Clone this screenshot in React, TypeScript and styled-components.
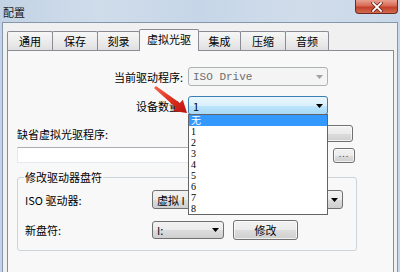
import React from "react";
import styled, { createGlobalStyle, css } from "styled-components";

const Global = createGlobalStyle`
  html, body {
    margin: 0;
    padding: 0;
    width: 400px;
    height: 272px;
    overflow: hidden;
    font-family: "Noto Sans CJK SC", "Noto Sans", sans-serif;
    font-size: 11px;
    color: #000;
  }
  #root { height: 100%; }
  * { box-sizing: border-box; }
`;

const Window = styled.div`
  width: 400px;
  height: 272px;
  display: flex;
  flex-direction: column;
  background: linear-gradient(90deg, #c3d3e5 0%, #cfdcea 25%, #c6d6e8 50%, #d0dcea 75%, #c9d8e8 100%);
`;

const TitleBar = styled.div`
  height: 22px;
  flex: none;
  display: flex;
  justify-content: space-between;
  align-items: flex-start;
  padding-left: 3px;
`;

const Title = styled.div`
  line-height: 22px;
  padding-top: 1px;
  font-size: 11px;
  color: #1a1a1a;
`;

const CloseButton = styled.div`
  width: 43px;
  height: 14px;
  margin-right: 2px;
  border: 1px solid #6e2a20;
  border-top: none;
  border-radius: 0 0 4px 4px;
  background: linear-gradient(#e8a090 0%, #d86a55 45%, #c3402a 55%, #d06a50 100%);
  display: flex;
  align-items: center;
  justify-content: center;
`;

const Client = styled.div`
  flex: 1;
  margin: 0 2px;
  border: 1px solid #8597ad;
  border-bottom: none;
  background: #f0f0f0;
  padding: 6px 0 0 4px;
  display: flex;
  flex-direction: column;
  min-height: 0;
`;

const TabsRow = styled.div`
  display: flex;
  align-items: flex-end;
  height: 22px;
  margin-bottom: -1px;
  position: relative;
  z-index: 2;
  flex: none;
`;

const Tab = styled.div<{ $w: number; $active?: boolean }>`
  width: ${(p) => p.$w}px;
  border: 1px solid #898c95;
  border-bottom: none;
  border-radius: 2px 2px 0 0;
  display: flex;
  justify-content: center;
  font-size: 11px;
  & + & { margin-left: -1px; }
  ${(p) =>
    p.$active
      ? css`
          height: 22px;
          background: #f8f8f8;
          line-height: 19px;
          position: relative;
          z-index: 1;
        `
      : css`
          height: 19px;
          margin-bottom: 1px;
          background: linear-gradient(#f6f6f6 0%, #ececec 50%, #e0e0e0 100%);
          line-height: 18px;
        `}
`;

const Panel = styled.div`
  width: 387px;
  flex: 1;
  border: 1px solid #898c95;
  border-bottom: none;
  background: #f8f8f8;
  position: relative;
  z-index: 1;
  display: flex;
  flex-direction: column;
`;

const FormRow = styled.div<{ $mt: number }>`
  margin-top: ${(p) => p.$mt}px;
  display: flex;
  align-items: center;
  gap: 5px;
`;

const RightLabel = styled.div`
  width: 175px;
  text-align: right;
  white-space: nowrap;
`;

const ComboWrap = styled.div`
  position: relative;
`;

type ComboVariant = "normal" | "disabled" | "open";

const Combo = styled.div<{ $w: number; $h?: number; $variant?: ComboVariant }>`
  width: ${(p) => p.$w}px;
  height: ${(p) => p.$h ?? 19}px;
  border-radius: 3px;
  display: flex;
  align-items: center;
  justify-content: space-between;
  padding: 0 4px 0 3px;
  white-space: nowrap;
  overflow: hidden;
  ${(p) =>
    p.$variant === "disabled"
      ? css`
          border: 1px solid #adb2b5;
          background: #f4f4f4;
          color: #6d6d6d;
        `
      : p.$variant === "open"
      ? css`
          border: 1px solid #3c7fb1;
          background: linear-gradient(#eaf6fd 0%, #d9f0fc 50%, #bee6fd 50%, #a7d9f5 100%);
        `
      : css`
          border: 1px solid #707070;
          background: linear-gradient(#f2f2f2 0%, #ebebeb 50%, #dddddd 50%, #cfcfcf 100%);
        `}
`;

const ComboText = styled.span<{ $mono?: boolean }>`
  font-family: ${(p) => (p.$mono ? `"Liberation Mono", monospace` : `"Noto Sans CJK SC", sans-serif`)};
  font-size: 11px;
  padding-left: 1px;
  overflow: hidden;
`;

const DropList = styled.div`
  position: absolute;
  left: 0;
  top: calc(100% - 1px);
  width: 100%;
  border: 1px solid #646464;
  background: #fff;
  z-index: 5;
`;

const DropItem = styled.div<{ $sel?: boolean }>`
  height: 11px;
  line-height: 11px;
  padding-left: 2px;
  font-size: 10px;
  overflow: hidden;
  color: ${(p) => (p.$sel ? "#fff" : "#000")};
  background: ${(p) => (p.$sel ? "#3399ff" : "transparent")};
  font-family: "Liberation Serif", "Noto Sans CJK SC", serif;
`;

const Section = styled.div`
  margin-left: 9px;
  width: 340px;
  display: flex;
  flex-direction: column;
`;

const LabelRow = styled.div`
  margin-top: 10px;
  height: 17px;
  display: flex;
  align-items: center;
  justify-content: space-between;
`;

const Button = styled.div<{ $w: number; $h: number }>`
  width: ${(p) => p.$w}px;
  height: ${(p) => p.$h}px;
  border: 1px solid #707070;
  border-radius: 3px;
  background: linear-gradient(#f2f2f2 0%, #ebebeb 50%, #dddddd 50%, #cfcfcf 100%);
  display: flex;
  align-items: center;
  justify-content: center;
  font-size: 11px;
  box-shadow: inset 0 0 0 1px rgba(255, 255, 255, 0.7);
`;

const FieldRow = styled.div`
  margin-top: 5px;
  display: flex;
  align-items: center;
  gap: 5px;
`;

const TextField = styled.div`
  width: 311px;
  height: 16px;
  background: #fff;
  border: 1px solid #e3e9ef;
  border-top-color: #abadb3;
`;

const Dots = styled.span`
  font-size: 9px;
  color: #555;
  letter-spacing: 1px;
  line-height: 9px;
  margin-top: -3px;
`;

const GroupBox = styled.fieldset`
  margin: 7px 0 0 0;
  padding: 0 0 10px 6px;
  border: 1px solid #cdd4d9;
  border-radius: 3px;
  width: 340px;
  min-width: 0;
`;

const Legend = styled.legend`
  padding: 0 1px;
  line-height: 14px;
  font-size: 11px;
`;

const GroupRow = styled.div<{ $mt: number }>`
  margin-top: ${(p) => p.$mt}px;
  display: flex;
  align-items: center;
`;

const LeftLabel = styled.div`
  width: 128px;
  padding-left: 1px;
  white-space: nowrap;
`;

const Gap = styled.div<{ $w: number }>`
  width: ${(p) => p.$w}px;
  flex: none;
`;

const ArrowOverlay = styled.svg`
  position: absolute;
  left: 142px;
  top: 31px;
  z-index: 10;
  overflow: visible;
`;

const Caret = ({ color = "#000" }: { color?: string }) => (
  <svg width="7" height="4" viewBox="0 0 7 4" style={{ flex: "none" }}>
    <path d="M0 0 H7 L3.5 4 Z" fill={color} />
  </svg>
);

export default function App() {
  return (
    <>
      <Global />
      <Window>
        <TitleBar>
          <Title>配置</Title>
          <CloseButton>
            <svg width="12" height="10" viewBox="0 0 12 10">
              <path d="M2 1 L10 9 M10 1 L2 9" stroke="#5a1a10" strokeWidth="3.2" strokeLinecap="square" />
              <path d="M2 1 L10 9 M10 1 L2 9" stroke="#fff" strokeWidth="1.8" strokeLinecap="square" />
            </svg>
          </CloseButton>
        </TitleBar>
        <Client>
          <TabsRow>
            <Tab $w={46}>通用</Tab>
            <Tab $w={46}>保存</Tab>
            <Tab $w={43}>刻录</Tab>
            <Tab $w={60} $active>虚拟光驱</Tab>
            <Tab $w={43}>集成</Tab>
            <Tab $w={46}>压缩</Tab>
            <Tab $w={44}>音频</Tab>
          </TabsRow>
          <Panel>
            <FormRow $mt={16}>
              <RightLabel>当前驱动程序:</RightLabel>
              <Combo $w={140} $variant="disabled">
                <ComboText $mono>ISO Drive</ComboText>
                <Caret color="#a0a0a0" />
              </Combo>
            </FormRow>
            <FormRow $mt={10}>
              <RightLabel>设备数量:</RightLabel>
              <ComboWrap>
                <Combo $w={140} $variant="open">
                  <ComboText>1</ComboText>
                  <Caret />
                </Combo>
                <DropList>
                  <DropItem $sel>无</DropItem>
                  {["1", "2", "3", "4", "5", "6", "7", "8"].map((n) => (
                    <DropItem key={n}>{n}</DropItem>
                  ))}
                </DropList>
              </ComboWrap>
            </FormRow>
            <Section>
              <LabelRow>
                <span>缺省虚拟光驱程序:</span>
                <Button $w={90} $h={17} style={{ marginRight: 4 }} />
              </LabelRow>
              <FieldRow>
                <TextField />
                <Button $w={22} $h={15}>
                  <Dots>...</Dots>
                </Button>
              </FieldRow>
              <GroupBox>
                <Legend>修改驱动器盘符</Legend>
                <GroupRow $mt={6}>
                  <LeftLabel>ISO 驱动器:</LeftLabel>
                  <Combo $w={191}>
                    <ComboText>虚拟 I</ComboText>
                    <Caret />
                  </Combo>
                </GroupRow>
                <GroupRow $mt={11}>
                  <LeftLabel>新盘符:</LeftLabel>
                  <Combo $w={72} $h={18}>
                    <ComboText>I:</ComboText>
                    <Caret />
                  </Combo>
                  <Gap $w={9} />
                  <Button $w={65} $h={20}>修改</Button>
                </GroupRow>
              </GroupBox>
            </Section>
            <ArrowOverlay width="42" height="34" viewBox="0 0 42 34">
              <defs>
                <linearGradient id="arrowGrad" x1="0" y1="0" x2="1" y2="1">
                  <stop offset="0" stopColor="#f06a50" />
                  <stop offset="0.5" stopColor="#e0301e" />
                  <stop offset="1" stopColor="#b81410" />
                </linearGradient>
              </defs>
              <polygon
                points="6,3.9 29.9,21.1 32.8,17.8 37,31 23.2,29 26.1,25.7 4,6.1"
                fill="url(#arrowGrad)"
              />
            </ArrowOverlay>
          </Panel>
        </Client>
      </Window>
    </>
  );
}
